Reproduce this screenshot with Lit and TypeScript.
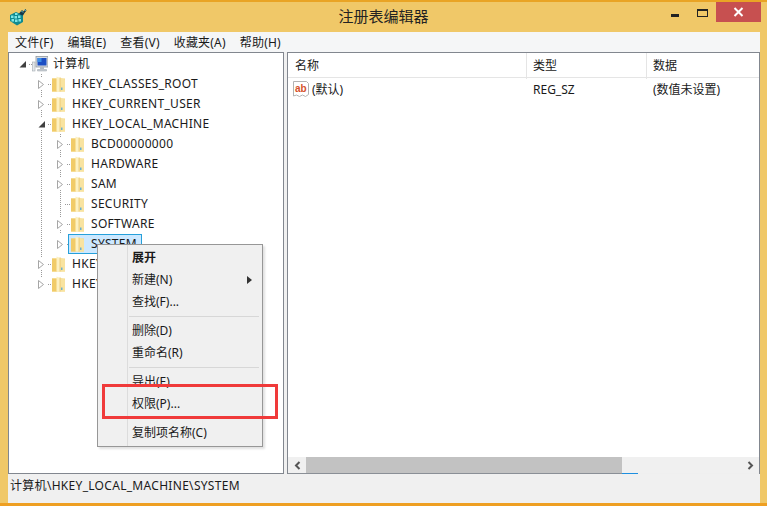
import { LitElement, html, css, svg } from "lit";
import { customElement } from "lit/decorators.js";

const folder = () => html`<svg class="ico" width="16" height="18" viewBox="0 0 16 18">
  <path d="M1 3.500h13v13H1z" fill="#f4d67e"/>
  <path d="M1 3.500h5v13H1z" fill="#f1cb68"/>
  <path d="M5.500 1.500l4 1.500v13.500h-4z" fill="#fdf1c2"/>
  <path d="M9 2.500l5 2v12H9z" fill="#f8e3a0"/>
  <path d="M9 2.500v14" stroke="#e3b95a" stroke-width=".6"/>
  <rect x="10" y="12.500" width="1.500" height="2.500" fill="#6cb2cf"/>
</svg>`;

const computer = () => html`<svg class="ico" width="16" height="18" viewBox="0 0 16 18">
  <rect x=".5" y="7" width="2.500" height="9" fill="#e4e8ea" stroke="#a3abb1" stroke-width=".6"/>
  <rect x="4" y="1.500" width="12" height="10.500" fill="#d8dde2" stroke="#8f979f" stroke-width=".8"/>
  <rect x="5.500" y="3" width="9" height="7.500" fill="#1c4fc4"/>
  <rect x="5.500" y="3" width="4" height="4" fill="#3c8fe8"/>
  <path d="M8 12h4v2H8z" fill="#b4bbc2"/>
  <path d="M5.500 14.500h9v1.500h-9z" fill="#c9ced3" stroke="#9aa1a8" stroke-width=".5"/>
</svg>`;

const regIcon = () => html`<svg width="18" height="18" viewBox="0 0 18 18">
  <path d="M1 7l6-3 7 3v7l-6 3.500-7-4.500z" fill="#0f8a90"/>
  <path d="M2 7.500h2.500v2.500H2zM5.500 8h2.500v2.500H5.500zM9 7.500h2.500V10H9zM2.500 11h2.500v2.500H2.500zM6 11.500h2.500V14H6zM9.500 11h2.500v2.500H9.500zM6 5h2.500v2H6z" fill="#7fe6e6"/>
  <path d="M10 5.500l3-3.500 1.500 1.500 2-2.500 1 1.500-2 2.500-1.500 2.500-2-.5z" fill="#16384a"/>
  <path d="M12.500 3l1.500 1.500M15.500 1.500l1 1.500" stroke="#6fd8dc" stroke-width="1"/>
</svg>`;

const abIcon = () => html`<svg width="16" height="16" viewBox="0 0 16 16">
  <path d="M.5 .5h13l2 2v11l-3 2-3-1.500-3 1.500-3-1.500-3 1z" fill="#fff" stroke="#b3b3b3"/>
  <text x="2" y="11" class="ab">ab</text>
</svg>`;

type Node = { label: string; icon: "pc" | "folder"; level: number; exp?: "open" | "closed" | "none"; guides: number[]; sel?: boolean; last?: boolean };

const L1 = 32, L2 = 51;
const nodes: Node[] = [
  { label: "计算机", icon: "pc", level: 0, exp: "open", guides: [] },
  { label: "HKEY_CLASSES_ROOT", icon: "folder", level: 1, exp: "closed", guides: [L1] },
  { label: "HKEY_CURRENT_USER", icon: "folder", level: 1, exp: "closed", guides: [L1] },
  { label: "HKEY_LOCAL_MACHINE", icon: "folder", level: 1, exp: "open", guides: [L1] },
  { label: "BCD00000000", icon: "folder", level: 2, exp: "closed", guides: [L1, L2] },
  { label: "HARDWARE", icon: "folder", level: 2, exp: "closed", guides: [L1, L2] },
  { label: "SAM", icon: "folder", level: 2, exp: "closed", guides: [L1, L2] },
  { label: "SECURITY", icon: "folder", level: 2, exp: "none", guides: [L1, L2] },
  { label: "SOFTWARE", icon: "folder", level: 2, exp: "closed", guides: [L1, L2] },
  { label: "SYSTEM", icon: "folder", level: 2, exp: "closed", guides: [L1], sel: true },
  { label: "HKEY_USERS", icon: "folder", level: 1, exp: "closed", guides: [L1] },
  { label: "HKEY_CURRENT_CONFIG", icon: "folder", level: 1, exp: "closed", guides: [], last: true },
];

const gutter = (n: Node) => {
  const w = 23 + 19 * n.level;
  const cx = 13 + 19 * n.level;
  const dots = "1 1";
  return html`<svg class="gut" width=${w} height="20" viewBox="0 0 ${w} 20">
    ${n.guides.map((x) => svg`<path d="M${x + 0.5} 0V20" stroke="#9a9a9a" stroke-dasharray=${dots}/>`)}
    ${n.last ? svg`<path d="M${cx + 0.5} 0V10" stroke="#9a9a9a" stroke-dasharray=${dots}/>` : ""}
    <path d="M${cx + 5} 10.500H${w}" stroke="#9a9a9a" stroke-dasharray=${dots}/>
    ${n.exp === "closed"
      ? svg`<rect x=${cx - 4} y="4" width="10" height="12" fill="#fff"/><path d="M${cx - 2.5} 6.500l5 4-5 4z" fill="#fff" stroke="#a6a6a6"/>`
      : n.exp === "open"
      ? svg`<rect x=${cx - 4} y="4" width="10" height="12" fill="#fff"/><path d="M${cx + 4} 7v6.500h-6.500z" fill="#404040"/>`
      : ""}
  </svg>`;
};

@customElement("app-root")
export class AppRoot extends LitElement {
  static styles = css`
    :host { display: block; width: 767px; height: 506px; overflow: hidden; position: relative;
      font-family: "Noto Sans", "Noto Sans CJK SC", sans-serif; font-size: 12px; color: #1a1a1a; }
    .win { box-sizing: border-box; width: 767px; height: 506px; background: #f0c868;
      border-top: 2px solid #e9a425; border-bottom: 3px solid #ee9f22;
      display: flex; flex-direction: column; }
    .title { height: 30px; flex: none; display: grid; grid-template-columns: 1fr auto 1fr; align-items: start; }
    .appicon { padding: 6px 0 0 9px; height: 18px; }
    .titletext { font-size: 15px; line-height: 29px; color: #222; }
    .wbtns { display: flex; justify-content: flex-end; padding-right: 6px; align-items: flex-start; }
    .min { width: 8px; height: 3px; background: #222; margin: 12px 18px 0 0; }
    .max { box-sizing: border-box; width: 11px; height: 8px; border: 1px solid #222; border-top-width: 2px; margin: 7px 8px 0 0; }
    .close { width: 45px; height: 20px; background: #c75050; display: flex; align-items: center; justify-content: center; }
    .body { flex: 1; min-height: 0; margin: 0 7px 0 8px; display: flex; flex-direction: column; }
    .menu { height: 20px; flex: none; background: #f5f6f7; display: flex; align-items: center; letter-spacing: .2px; }
    .menu span { padding: 0 7px; white-space: nowrap; }
    .panes { height: 422px; flex: none; display: flex; gap: 3px; background: #f0f0f0; }
    .pane { box-sizing: border-box; background: #fff; border: 1px solid #82878f; }
    .tree { width: 276px; padding-top: 1px; overflow: hidden; }
    .row { display: flex; align-items: center; height: 20px; white-space: nowrap; letter-spacing: .3px; }
    .row .gut { flex: none; }
    .ico { flex: none; }
    .row .label { margin-left: 4px; padding: 0 1px; line-height: 18px; }
    .selwrap { display: flex; align-items: center; height: 18px; align-self: flex-start; box-sizing: content-box; background: #cce8ff; border: 1px solid #26a0da; margin-left: -2px; padding-left: 1px; }
    .selwrap .label { padding-right: 0; width: 50px; }
    .list { flex: 1; min-width: 0; display: flex; flex-direction: column; border-bottom: 0; }
    .lhead { display: grid; grid-template-columns: 239px 120px 1fr; height: 24px; flex: none; border-bottom: 1px solid #e5e5e5; }
    .lhead span { padding-left: 7px; line-height: 26px; border-right: 1px solid #e5e5e5; }
    .lhead span:nth-child(2) { padding-left: 6px; }
    .lhead span:last-child { border: 0; padding-left: 6px; }
    .lrow { display: grid; grid-template-columns: 239px 120px 1fr; height: 20px; margin-top: 1px; align-items: center; }
    .lrow .n { display: flex; align-items: center; padding-left: 5px; gap: 3px; }
    .lrow .t { padding-left: 6px; }
    .lrow .d { padding-left: 6px; }
    .spacer { flex: 1; }
    .hscroll { height: 16px; flex: none; background: #f0f0f0; display: flex; align-items: center; }
    .arrow { width: 18px; text-align: center; flex: none; display: flex; justify-content: center; }
    .thumb { width: 316px; height: 100%; background: #c2c2c2; flex: none; }
    .strip { height: 1px; flex: none; background: linear-gradient(90deg, #8a8f96 0 334px, #1e8fe0 334px 350px, #efefef 350px); }
    .status { flex: 1; background: #f0f0f0; padding: 0 2px; line-height: 23px; white-space: nowrap; letter-spacing: .3px; }
    .ctx { position: absolute; left: 97px; top: 244px; width: 166px; box-sizing: border-box; background: #f0f0f0;
      border: 1px solid #979797; padding: 1px 1px 3px; box-shadow: 2px 2px 2px rgba(0,0,0,.12);
      background-image: linear-gradient(#dcdcdc, #dcdcdc); background-size: 1px 100%; background-position: 29px 0; background-repeat: no-repeat; }
    .item { height: 22px; line-height: 24px; padding-left: 33px; position: relative; white-space: nowrap; }
    .item.b { font-weight: 700; }
    .item svg { position: absolute; right: 9px; top: 8px; }
    .sep { height: 1px; margin: 4px 2px 2px 30px; background: #d7d7d7; }
    .redbox { position: absolute; left: 102px; top: 384px; width: 176px; height: 35px; box-sizing: border-box; border: 3px solid #f03a3a; }
    .ab { font: 700 10px "Liberation Sans", sans-serif; fill: #d6502a; }
  `;

  private renderNode(n: Node) {
    const icon = n.icon === "pc" ? computer() : folder();
    if (n.sel) {
      return html`<div class="row">${gutter(n)}<div class="selwrap">${icon}<span class="label">${n.label}</span></div></div>`;
    }
    return html`<div class="row">${gutter(n)}${icon}<span class="label">${n.label}</span></div>`;
  }

  render() {
    return html`
      <div class="win">
        <div class="title">
          <div class="appicon">${regIcon()}</div>
          <div class="titletext">注册表编辑器</div>
          <div class="wbtns">
            <div class="min"></div><div class="max"></div>
            <div class="close"><svg width="11" height="10" viewBox="0 0 11 10"><path d="M1.500 1l8 8M9.500 1l-8 8" stroke="#fff" stroke-width="2"/></svg></div>
          </div>
        </div>
        <div class="body">
          <div class="menu">
            <span>文件(F)</span><span>编辑(E)</span><span>查看(V)</span><span>收藏夹(A)</span><span>帮助(H)</span>
          </div>
          <div class="panes">
            <div class="pane tree">${nodes.map((n) => this.renderNode(n))}</div>
            <div class="pane list">
              <div class="lhead"><span>名称</span><span>类型</span><span>数据</span></div>
              <div class="lrow">
                <div class="n">${abIcon()}<span>(默认)</span></div>
                <div class="t">REG_SZ</div>
                <div class="d">(数值未设置)</div>
              </div>
              <div class="spacer"></div>
              <div class="hscroll">
                <div class="arrow"><svg width="7" height="9" viewBox="0 0 7 9"><path d="M5.500 1L2 4.500 5.500 8" fill="none" stroke="#555" stroke-width="2"/></svg></div>
                <div class="thumb"></div>
                <div class="spacer"></div>
                <div class="arrow"><svg width="7" height="9" viewBox="0 0 7 9"><path d="M1.500 1L5 4.500 1.500 8" fill="none" stroke="#555" stroke-width="2"/></svg></div>
              </div>
              <div class="strip"></div>
            </div>
          </div>
          <div class="status">计算机\\HKEY_LOCAL_MACHINE\\SYSTEM</div>
        </div>
      </div>
      <div class="ctx">
        <div class="item b">展开</div>
        <div class="item">新建(N)<svg width="5" height="8" viewBox="0 0 5 8"><path d="M0 0l5 4-5 4z" fill="#333"/></svg></div>
        <div class="item">查找(F)...</div>
        <div class="sep"></div>
        <div class="item">删除(D)</div>
        <div class="item">重命名(R)</div>
        <div class="sep"></div>
        <div class="item">导出(E)</div>
        <div class="item">权限(P)...</div>
        <div class="sep"></div>
        <div class="item">复制项名称(C)</div>
      </div>
      <div class="redbox"></div>
    `;
  }
}
